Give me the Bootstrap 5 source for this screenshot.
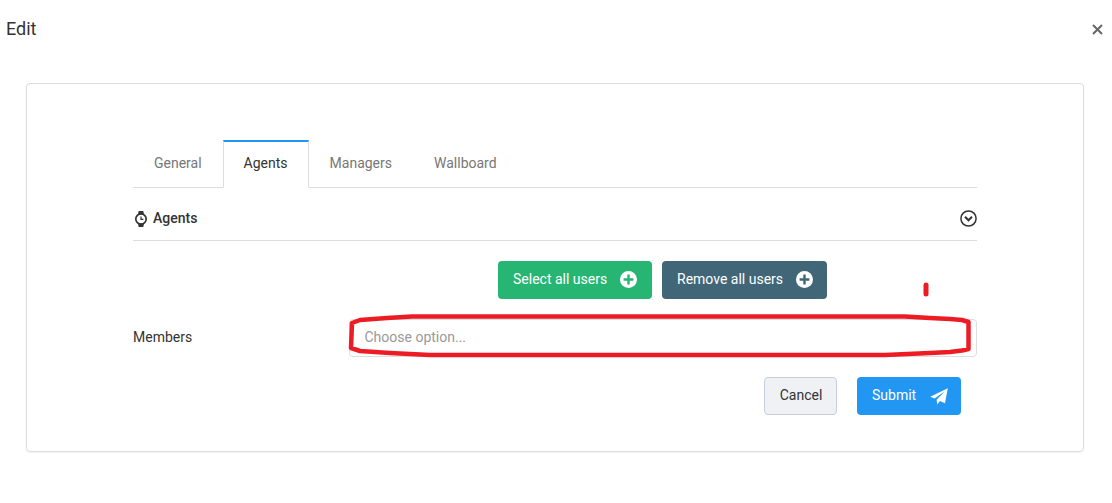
<!DOCTYPE html>
<html lang="en">
<head>
<meta charset="utf-8">
<title>Edit</title>
<link href="https://cdn.jsdelivr.net/npm/bootstrap@5.3.0/dist/css/bootstrap.min.css" rel="stylesheet">
<style>
html,body{height:100%;overflow:hidden}
body{font-family:Roboto,"Liberation Sans",sans-serif;font-size:14px;color:#333;background:#fff;position:relative}
.dlg-head{height:58px;padding:0 6px}
.dlg-title{font-size:18px;font-weight:400;color:#333;margin:0;line-height:1}
.dlg-close{line-height:0;background:none;border:0;padding:0;margin-right:3px;margin-top:1px}
.panel{margin:25px 28px 0 26px;height:369px;border:1px solid #ddd;border-radius:4px;padding:56px 106px 0;box-shadow:0 1px 2px rgba(0,0,0,.05)}
.tabset{display:flex;height:48px;border-bottom:1px solid #ddd;list-style:none;margin:0;padding:0}
.tabset a{display:block;height:48px;padding:11px 20px 0;line-height:20px;color:#777;text-decoration:none;border:1px solid transparent;border-top-width:2px}
.tabset a.on{color:#333;background:#fff;border-color:#2196f3 #ddd #fff;border-top-color:#2196f3}
.sect{height:53px;border-bottom:1px solid #ddd;padding-top:9px;font-weight:500;color:#333}
.lbl{width:216px;flex:none;padding-bottom:2px}
.btn-act{height:38px;padding:0 15px 2px;font-size:14px;border-radius:4px;color:#fff;border:0;display:inline-flex;align-items:center;white-space:nowrap}
.btn-act:hover{color:#fff}
.b-green{background:#26b573;width:154px}
.b-slate{background:#416678;width:165px}
.b-blue{background:#2196f3;width:104px}
.b-cancel{height:38px;width:73px;padding:0 0 2px 1px;font-size:14px;background:#eff1f5;border:1px solid #c5cedb;color:#333;border-radius:4px}
.ipt{height:38px;font-size:14px;padding:0 15px 2px 14.5px;border:1px solid #ddd;border-radius:4px;color:#333}
.ipt::placeholder{color:#999;opacity:1}
.acts{gap:10px;margin-top:20px;padding-left:215px}
.mem-row{margin-top:20px}
.foot{gap:20px;padding-right:16px;margin-top:20px}
.ink{position:absolute;left:0;top:0;pointer-events:none}
.ico-gap{margin-left:13px;flex:none}
.ico-plane{margin-left:13.5px;margin-top:2px;flex:none}
</style>
</head>
<body>
<div class="dlg-head d-flex align-items-center justify-content-between">
  <h5 class="dlg-title">Edit</h5>
  <button class="dlg-close" type="button" aria-label="Close"><svg width="11" height="11" viewBox="0 0 11 11"><path d="M1 1L10 10M10 1L1 10" stroke="#666" stroke-width="2"/></svg></button>
</div>
<div class="panel">
  <ul class="tabset">
    <li><a href="#">General</a></li>
    <li><a href="#" class="on">Agents</a></li>
    <li><a href="#">Managers</a></li>
    <li><a href="#">Wallboard</a></li>
  </ul>
  <div class="sect d-flex align-items-center justify-content-between">
    <span class="d-flex align-items-center gap-1">
      <svg width="16" height="16" viewBox="0 0 16 16" fill="none" stroke="#333"><circle cx="8" cy="8" r="5.2" stroke-width="1.7"/><path d="M8 5.4V8.3H10.4" stroke-width="1.2"/><path d="M5 3.4L5.7 0H10.3L11 3.4ZM5 12.6L5.7 16H10.3L11 12.6Z" fill="#333" stroke="none"/></svg>
      Agents
    </span>
    <svg width="17" height="17" viewBox="0 0 17 17" fill="none" stroke="#333"><circle cx="8.5" cy="8.5" r="7.6" stroke-width="1.5"/><path d="M5 6.8L8.5 10.3L12 6.8" stroke-width="2"/></svg>
  </div>
  <div class="d-flex justify-content-center acts">
    <button class="btn btn-act b-green" type="button">Select all users
      <svg class="ico-gap" width="17" height="17" viewBox="0 0 17 17"><circle cx="8.5" cy="8.5" r="8.5" fill="#fff"/><path d="M8.5 3.6V13.4M3.6 8.5H13.4" stroke="#26b573" stroke-width="2.4"/></svg></button>
    <button class="btn btn-act b-slate" type="button">Remove all users
      <svg class="ico-gap" width="17" height="17" viewBox="0 0 17 17"><circle cx="8.5" cy="8.5" r="8.5" fill="#fff"/><path d="M8.5 3.6V13.4M3.6 8.5H13.4" stroke="#416678" stroke-width="2.4"/></svg></button>
  </div>
  <div class="d-flex align-items-center mem-row">
    <label class="lbl" for="mem">Members</label>
    <input id="mem" class="form-control ipt" placeholder="Choose option...">
  </div>
  <div class="d-flex justify-content-end foot">
    <button class="btn b-cancel" type="button">Cancel</button>
    <button class="btn btn-act b-blue" type="button">Submit
      <svg class="ico-plane" width="18" height="17" viewBox="0 0 18 17"><path d="M17.8 .2L15 15.2L9.9 13L7.2 16.6L6.6 11.8L14.6 3.6L4.6 10.6L.2 8.8Z" fill="#fff"/></svg></button>
  </div>
</div>
<svg class="ink" width="1112" height="503" viewBox="0 0 1112 503" fill="none" stroke="#ed1c24" stroke-width="4.5" stroke-linejoin="round">
  <path d="M412 316.5L387 318L360 320L352 323L351 348L360 351L390 353L430 355L885 355L930 353L950 352L962 350.500L968.500 349V322L962 320L950 319L930 318L905 316.5Z"/>
  <path d="M926 285V294" stroke-width="5" stroke-linecap="round"/>
</svg>
<script src="https://cdn.jsdelivr.net/npm/bootstrap@5.3.0/dist/js/bootstrap.bundle.min.js"></script>
</body>
</html>
